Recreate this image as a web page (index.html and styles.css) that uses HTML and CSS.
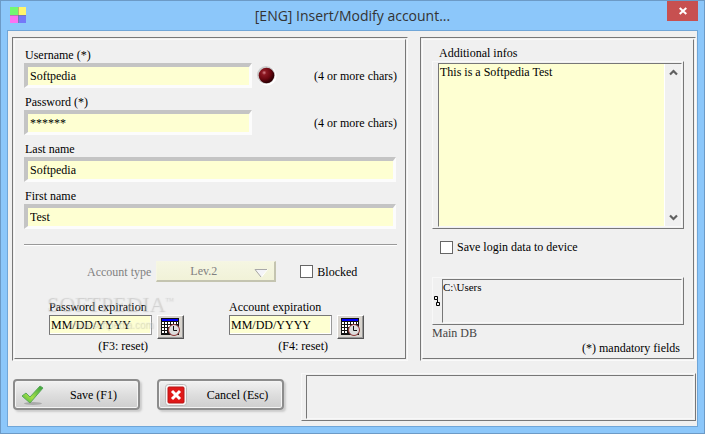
FILE: index.html
```html
<!DOCTYPE html>
<html lang="en">
  <head>
    <meta charset="utf-8">
    <title>Insert/Modify account</title>
    <link rel="stylesheet" href="styles.css">
  </head>
  <body>
    <header class="titlebar">
      <svg class="logo" width="16" height="16" viewBox="0 0 16 16">
        <rect width="8" height="8" fill="#72f872"/>
        <rect x="8" width="8" height="8" fill="#fff56c"/>
        <rect y="8" width="8" height="8" fill="#fb72f2"/>
        <rect x="8" y="8" width="8" height="8" fill="#7478f8"/>
        <path d="M8.500 0V16M0 8.500H16" stroke="#777" stroke-opacity=".5"/>
      </svg>
      <h1>[ENG] Insert/Modify account...</h1>
      <button type="button" class="close" aria-label="Close">
        <svg width="8" height="8" viewBox="0 0 8 8"><path d="M.7 1 7.300 7M7.300 1 .7 7" stroke="#fff" stroke-width="2"/></svg>
      </button>
    </header>

    <form class="client">
      <div class="panels">
        <section class="panel">
          <div class="panel-in account">
            <div class="field">
              <label for="username">Username (*)</label>
              <div class="line">
                <input type="text" class="box short" id="username" value="Softpedia">
                <svg class="led" width="20" height="20" viewBox="0 0 20 20">
                  <defs>
                    <radialGradient id="red" cx=".35" cy=".32" r=".65">
                      <stop offset="0" stop-color="#d8848c"/>
                      <stop offset=".22" stop-color="#8c1822"/>
                      <stop offset=".65" stop-color="#6a0710"/>
                      <stop offset="1" stop-color="#300004"/>
                    </radialGradient>
                  </defs>
                  <circle cx="10" cy="10" r="9.500" fill="#fff"/>
                  <circle cx="9" cy="9" r="9" fill="#ccc"/>
                  <circle cx="9.500" cy="9.500" r="7.800" fill="url(#red)"/>
                </svg>
                <span class="hint">(4 or more chars)</span>
              </div>
            </div>
            <div class="field">
              <label for="password">Password (*)</label>
              <div class="line">
                <input type="text" class="box short" id="password" value="******">
                <span class="hint">(4 or more chars)</span>
              </div>
            </div>
            <div class="field">
              <label for="lastname">Last name</label>
              <div class="line"><input type="text" class="box" id="lastname" value="Softpedia"></div>
            </div>
            <div class="field">
              <label for="firstname">First name</label>
              <div class="line"><input type="text" class="box" id="firstname" value="Test"></div>
            </div>
            <hr>
            <div class="type">
              <label for="level">Account type</label>
              <div class="level">
                <select id="level" disabled><option>Lev.2</option></select>
                <svg class="arrow" width="14" height="10" viewBox="0 0 14 10">
                  <path d="M1 1H13L7.500 9Z" fill="#f4f4f8"/>
                  <path d="M13.500 1.500 7.500 9" stroke="#fff" fill="none"/>
                  <path d="M13 1.500H1L7 9" stroke="#a8a8a8" fill="none"/>
                </svg>
              </div>
              <label class="check"><input type="checkbox">Blocked</label>
            </div>
            <div class="dates">
              <div class="date">
                <label for="pwexp">Password expiration</label>
                <div class="date-line">
                  <input type="text" id="pwexp" value="MM/DD/YYYY">
                  <button type="button" class="cal" aria-label="Pick password expiration">
                    <svg width="20" height="18" viewBox="0 0 20 18">
                      <path d="M0 0H18V17H0Z" fill="#111"/>
                      <path d="M1 1H17V3H1Z" fill="#00f"/>
                      <path d="M1 4h2v2h-2zM4 4h2v2h-2zM7 4h2v2h-2zM10 4h2v2h-2zM13 4h2v2h-2zM1 7h2v2h-2zM4 7h2v2h-2zM7 7h2v2h-2zM1 10h2v2h-2zM4 10h2v2h-2zM1 13h2v2h-2zM4 13h2v2h-2zM16 4h1v2h-1z" fill="#fff"/>
                      <circle cx="13" cy="12" r="5.500" fill="#ddd" stroke="#943838"/>
                      <path d="M12.500 8V12.500H16" stroke="#111" fill="none"/>
                    </svg>
                  </button>
                </div>
                <span class="reset">(F3: reset)</span>
                <div class="mark">
                  <div class="mark-name">SOFTPEDIA<sup>™</sup></div>
                  <div class="mark-url">www.softpedia.com</div>
                </div>
              </div>
              <div class="date">
                <label for="acexp">Account expiration</label>
                <div class="date-line">
                  <input type="text" id="acexp" value="MM/DD/YYYY">
                  <button type="button" class="cal" aria-label="Pick account expiration">
                    <svg width="20" height="18" viewBox="0 0 20 18">
                      <path d="M0 0H18V17H0Z" fill="#111"/>
                      <path d="M1 1H17V3H1Z" fill="#00f"/>
                      <path d="M1 4h2v2h-2zM4 4h2v2h-2zM7 4h2v2h-2zM10 4h2v2h-2zM13 4h2v2h-2zM1 7h2v2h-2zM4 7h2v2h-2zM7 7h2v2h-2zM1 10h2v2h-2zM4 10h2v2h-2zM1 13h2v2h-2zM4 13h2v2h-2zM16 4h1v2h-1z" fill="#fff"/>
                      <circle cx="13" cy="12" r="5.500" fill="#ddd" stroke="#943838"/>
                      <path d="M12.500 8V12.500H16" stroke="#111" fill="none"/>
                    </svg>
                  </button>
                </div>
                <span class="reset">(F4: reset)</span>
              </div>
            </div>
          </div>
        </section>

        <section class="panel">
          <div class="panel-in extra">
            <label class="indent" for="infos">Additional infos</label>
            <div class="frame infos">
              <div class="frame-in">
                <textarea id="infos">This is a Softpedia Test</textarea>
                <div class="scroll">
                  <svg width="9" height="7" viewBox="0 0 9 7"><path d="M1 5.500 4.500 2 8 5.500" stroke="#606060" stroke-width="2.200" fill="none"/></svg>
                  <svg width="9" height="7" viewBox="0 0 9 7"><path d="M1 1.500 4.500 5 8 1.500" stroke="#606060" stroke-width="2.200" fill="none"/></svg>
                </div>
              </div>
            </div>
            <label class="check save"><input type="checkbox">Save login data to device</label>
            <div class="frame db">
              <svg width="7" height="10" viewBox="0 0 7 10"><path d="M.5 .5h3v3h-3zM3.500 3.500v3M2.500 6.500h3v3h-3z" fill="none" stroke="#000"/></svg>
              <div class="frame-in path">C:\Users</div>
            </div>
            <div class="dbname">Main DB</div>
            <div class="note">(*) mandatory fields</div>
          </div>
        </section>
      </div>

      <div class="footer">
        <button type="button" class="btn">
          <svg width="26" height="22" viewBox="0 0 26 22">
            <defs>
              <linearGradient id="green" x1="0" y1="1" x2="1" y2="0">
                <stop offset="0" stop-color="#3fae38"/>
                <stop offset=".4" stop-color="#a4e048"/>
                <stop offset="1" stop-color="#2f9c3c"/>
              </linearGradient>
            </defs>
            <ellipse cx="12" cy="19.500" rx="9" ry="1.500" fill="#aaa"/>
            <path d="M1 12 5 9 9 13 19 2 22 4 9 19Z" fill="url(#green)" stroke="#5aa85a"/>
          </svg>
          <span>Save (F1)</span>
        </button>
        <button type="button" class="btn">
          <svg width="26" height="22" viewBox="0 0 26 22">
            <rect x=".5" y=".5" width="21" height="21" rx="3" fill="#f8f8f8" stroke="#bbb"/>
            <rect x="3" y="3" width="16" height="16" rx="1" fill="#e01818" stroke="#b81414"/>
            <path d="M7 7 15 15M15 7 7 15" stroke="#fff" stroke-width="3"/>
          </svg>
          <span>Cancel (Esc)</span>
        </button>
        <div class="frame status"><div class="frame-in"></div></div>
      </div>
    </form>
  </body>
</html>
```
FILE: styles.css
```css
* {
  box-sizing: border-box;
}
body {
  margin: 0;
  min-height: 100vh;
  display: flex;
  flex-direction: column;
  padding: 0 6px 6px;
  border: 1px solid #6c9ac6;
  background: #8cc7fa;
  color: #000;
  font: 12px/16px "Liberation Serif", "Times New Roman", serif;
}
input, select, button, textarea {
  font: inherit;
  color: inherit;
  border-radius: 0;
}
svg {
  display: block;
  flex: none;
}

/* title bar */
.titlebar {
  position: relative;
  height: 29px;
  display: flex;
  justify-content: center;
}
.titlebar h1 {
  margin: 0;
  font: 14px/29px "Open Sans", "Noto Sans", sans-serif;
  color: #333;
}
.logo {
  position: absolute;
  left: 3px;
  top: 6px;
}
.close {
  position: absolute;
  right: 0;
  top: 0;
  width: 31px;
  height: 20px;
  padding: 0;
  border: 0;
  background: #c75050;
  display: flex;
  align-items: center;
  justify-content: center;
}

.client {
  flex: 1;
  border: 1px solid #70a6d8;
  background: #f0f0f0;
  padding: 6px 0 4px 4px;
}

/* etched panels */
.panels {
  display: grid;
  grid-template-columns: 396fr 276fr;
  gap: 12px;
  padding-right: 1px;
}
.panel {
  border: 1px solid;
  border-color: #777 #fafafa #fafafa #777;
  padding: 1px;
}
.panel-in {
  height: 100%;
  border: 1px solid;
  border-color: #fafafa #777 #777 #fafafa;
}
.account {
  padding: 7px 8px 3px 9px;
}
.field {
  margin-bottom: 6px;
}
.field label {
  display: block;
  padding-left: 1px;
}
.line {
  display: flex;
  align-items: center;
}
.box {
  flex: 1;
  min-width: 0;
  height: 25px;
  margin-right: 1px;
  padding: 0 2px;
  border: 3px solid;
  border-width: 4px 3px 3px 4px;
  border-color: #c4c4c4 #fcfcfc #fcfcfc #c4c4c4;
  background: #feffd2;
  outline: 0;
}
.short {
  flex: 0 0 228px;
}
.led {
  margin-left: 4px;
}
.hint {
  margin-left: auto;
  white-space: nowrap;
}
.account hr {
  margin: 15px 0;
  border: 0;
  border-top: 1px solid #999;
  border-bottom: 1px solid #fff;
}
.type {
  display: flex;
  align-items: center;
  padding-left: 63px;
  color: #808080;
}
.level {
  position: relative;
  margin-left: 5px;
}
.level select {
  display: block;
  appearance: none;
  width: 120px;
  height: 21px;
  padding: 0 24px 0 0;
  text-align: center;
  text-align-last: center;
  border: 1px solid;
  border-color: #f6f6e4 #c4c4b0 #c4c4b0 #f6f6e4;
  border-width: 1px 2px 2px 1px;
  background: linear-gradient(#f5f6e2, #f1f2d8);
  opacity: 1;
}
.arrow {
  position: absolute;
  right: 8px;
  top: 7px;
}
.check {
  display: flex;
  align-items: center;
  color: #000;
}
.check input {
  appearance: none;
  width: 13px;
  height: 13px;
  margin: 0 4px 0 0;
  border: 1px solid #666;
  background: #fff;
}
.type .check {
  margin-left: 24px;
}
.dates {
  display: flex;
  gap: 45px;
  margin-top: 17px;
  padding-left: 25px;
}
.date {
  position: relative;
  width: 135px;
}
.date-line {
  display: flex;
  gap: 5px;
  height: 24px;
}
.date-line input {
  width: 103px;
  height: 20px;
  padding: 0 1px;
  border: 1px solid;
  border-color: #777 #999 #999 #777;
  box-shadow: inset -1px -1px #fff;
  background: #feffd2;
  outline: 0;
}
.cal {
  width: 27px;
  height: 24px;
  padding: 0;
  border: 1px solid;
  border-color: #fff #555 #555 #fff;
  box-shadow: inset -1px -1px #999;
  background: #d8d4ce;
  display: flex;
  align-items: center;
  justify-content: center;
}
.reset {
  display: block;
  width: 99px;
  line-height: 14px;
  text-align: right;
}

/* stamp laid over the dates */
.mark {
  position: absolute;
  left: -3px;
  top: -7px;
  color: rgba(245, 245, 245, .3);
  text-shadow: 1px 1px 1px rgba(120, 120, 120, .3);
  pointer-events: none;
  white-space: nowrap;
}
.mark-name {
  font-size: 22px;
  line-height: 24px;
}
.mark-name sup {
  font-size: 9px;
  line-height: 1;
}
.mark-url {
  padding: 1px 0 0 21px;
  font: 10px/16px "Liberation Sans", Arial, sans-serif;
}

/* right side */
.extra {
  padding: 5px 9px 3px;
}
.indent {
  display: block;
  padding-left: 7px;
}
.frame {
  display: flex;
  border: 1px solid;
  border-color: #f8f8f8 #777 #777 #f8f8f8;
  padding: 1px 1px 1px 5px;
}
.frame-in {
  flex: 1;
  min-width: 0;
  border: 1px solid;
  border-color: #777 #f8f8f8 #f8f8f8 #777;
}
.infos {
  height: 168px;
}
.infos .frame-in {
  display: flex;
}
.infos textarea {
  flex: 1;
  min-width: 0;
  margin: 0;
  padding: 0 1px;
  border: 0;
  outline: 0;
  resize: none;
  overflow: hidden;
  background: #feffd2;
}
.scroll {
  width: 17px;
  border-left: 1px solid #fff;
  padding: 5px 0;
  display: flex;
  flex-direction: column;
  align-items: center;
  justify-content: space-between;
}
.save {
  margin: 10px 8px 22px;
}
.db {
  height: 48px;
  padding-left: 1px;
  gap: 1px;
  align-items: center;
}
.db .frame-in {
  align-self: stretch;
}
.path {
  font-size: 11px;
  line-height: 14px;
}
.dbname {
  color: #444;
}
.note {
  padding-right: 4px;
  text-align: right;
  line-height: 14px;
}

/* buttons and status */
.footer {
  display: flex;
  align-items: flex-start;
  gap: 17px;
  margin-top: 12px;
  padding: 0 1px;
}
.btn {
  width: 127px;
  height: 31px;
  margin-top: 6px;
  padding: 0 2px 0 6px;
  display: flex;
  align-items: center;
  gap: 4px;
  border: 2px solid #8c8c8c;
  border-radius: 4px;
  background: linear-gradient(#f2f2f2, #dedede 50%, #cecece);
  box-shadow: inset 0 0 0 1px #f4f4f4, 2px 2px 2px #ccc;
}
.btn span {
  flex: 1;
  text-align: center;
}
.status {
  flex: 1;
  height: 48px;
  padding: 1px 1px 1px 4px;
}
```
